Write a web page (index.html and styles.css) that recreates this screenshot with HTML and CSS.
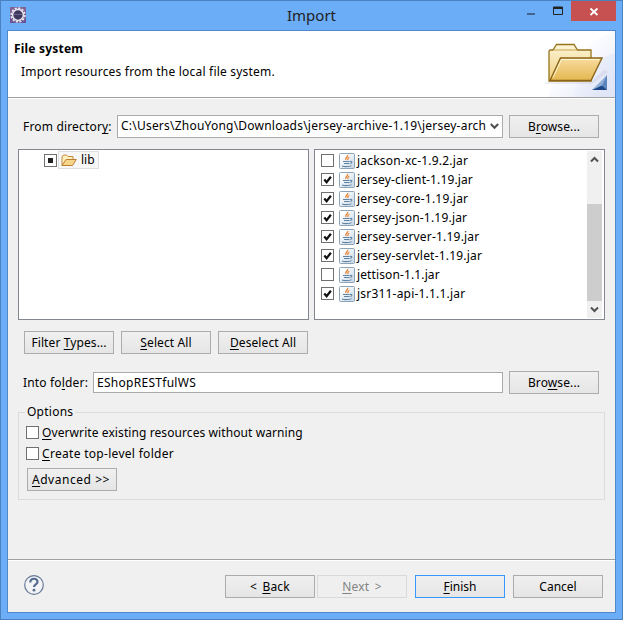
FILE: index.html
```html
<!DOCTYPE html>
<html lang="en">
<head>
<meta charset="utf-8">
<title>Import</title>
<link rel="stylesheet" href="styles.css">
</head>
<body>
<svg class="defs" width="0" height="0" aria-hidden="true">
  <defs>
    <linearGradient id="back" x1="0" y1="0" x2="0" y2="1"><stop offset="0" stop-color="#fdf6d8"/><stop offset="1" stop-color="#eccb78"/></linearGradient>
    <linearGradient id="front" x1="0" y1="0" x2="0" y2="1"><stop offset="0" stop-color="#f8dca0"/><stop offset="1" stop-color="#e4b750"/></linearGradient>
    <linearGradient id="jarbg" x1="0" y1="0" x2="1" y2="1"><stop offset="0.2" stop-color="#ffffff"/><stop offset="1" stop-color="#c3d4e4"/></linearGradient>
    <linearGradient id="glow" x1="0.2" y1="0.2" x2="1" y2="1"><stop offset="0.2" stop-color="#ffffff"/><stop offset="1" stop-color="#d9e0f6"/></linearGradient>
    <linearGradient id="glow2" x1="0" y1="0" x2="1" y2="0.4"><stop offset="0.1" stop-color="#dce3f7" stop-opacity="0"/><stop offset="1" stop-color="#dce3f7"/></linearGradient>
    <symbol id="jar" viewBox="0 0 16 16">
      <rect x=".5" y=".5" width="15" height="15" rx="1" fill="url(#jarbg)" stroke="#8da3b8"/>
      <path d="M8.800 1.800c.6 2-3 2.600-1.900 5.200M10.300 4.200c-2.200.9-1.600 1.500-1.300 3" fill="none" stroke="#e8812e" stroke-width="1.200"/>
      <path d="M4 8.500h6.500M5 10.500h5.500M3 12.900c2 .9 7.500 1 9.500-.3M11 8.500c2.500-.8 2.500 1.500.3 2" fill="none" stroke="#5f83a3" stroke-width="1.100"/>
    </symbol>
    <symbol id="tick" viewBox="0 0 13 13"><path d="M3.300 6.500 5.600 9.200 9.900 3.700" fill="none" stroke="#111" stroke-width="2.200"/></symbol>
  </defs>
</svg>
<div class="window">
  <header class="titlebar">
    <svg class="app-icon" viewBox="0 0 16 16"><rect width="16" height="16" fill="#6a5492"/><path d="M0 0h16v5H0z" fill="#7f6397"/><circle cx="8" cy="8" r="6.800" fill="none" stroke="#e9e6ee" stroke-width="1.800" stroke-dasharray="2.160 1.400"/><circle cx="8" cy="8" r="5.400" fill="#40375f" stroke="#e9e7ee" stroke-width="1.500"/><path d="M3.800 7.500h8.400" stroke="#6d6490"/></svg>
    <h1>Import</h1>
    <div class="controls">
      <svg width="50" height="20"><path d="M6 14h8" stroke="#41658f" stroke-width="2"/><path d="M32.500 7v7.500h9V7z" fill="none" stroke="#222"/><path d="M32 8h10" stroke="#222" stroke-width="2"/></svg>
      <div class="close"><svg width="45" height="20"><path d="M19.500 7.500l7 6.500M26.500 7.500l-7 6.500" stroke="#fff" stroke-width="1.800"/></svg></div>
    </div>
  </header>
  <main class="client">
    <section class="banner">
      <div class="heading"><h2>File system</h2><p>Import resources from the local file system.</p></div>
      <svg class="banner-art" width="75" height="66" viewBox="0 0 75 66">
        <path d="M75 0C48 10 18 32 8 66h67z" fill="url(#glow)" opacity=".8"/>
        <path d="M75 22C52 29 39 43 33 66h42z" fill="url(#glow2)" opacity=".6"/>
        <path d="M7 51h44l13-12 4 2-16 12H4z" fill="#9a96ac" opacity=".16"/>
        <path d="M9 50V20.500q0-1.500 1.500-1.500H13l3.500-5.500H34l3.500 5.500H51V50z" fill="url(#back)" stroke="#99731c" stroke-width="1.300"/>
        <path d="M14 19h23" stroke="#b9943b" stroke-width=".8"/>
        <path d="M10 49.500 20.500 27H62L51 49.500z" fill="url(#front)" stroke="#8a651b" stroke-width="1.400"/>
        <path d="M13 46.500 21.500 28.500H59" fill="none" stroke="#fff6d4"/>
        <path d="M67 44v15H52z" fill="#8fb0d6"/><path d="M67 44v15l-5-4.500z" fill="#5b86bd"/><path d="M52 59h15l-5-4.500z" fill="#1e4787"/>
      </svg>
    </section>
    <section class="body">
      <div class="field from">
        <label class="t-from">From director<u>y</u>:</label>
        <div class="combo"><span class="path">C:\Users\ZhouYong\Downloads\jersey-archive-1.19\jersey-arch</span><svg width="9" height="7"><path d="M.8 1 4.500 4.800 8.200 1" fill="none" stroke="#505050" stroke-width="2"/></svg></div>
        <button>B<u>r</u>owse...</button>
      </div>
      <div class="panes">
        <div class="pane tree"><span class="check part"></span><div class="node"><svg width="16" height="13" viewBox="0 0 16 13"><path d="M1 11.500V3l1.500-2h3L7 2.500h5V5" fill="#fff0bd" stroke="#c28a3d"/><path d="M1 11.500 5 5.500h10.300l-3.800 6z" fill="#f7d58b" stroke="#bd7f32"/></svg><span>lib</span></div></div>
        <div class="pane list">
          <ul>
            <li><span class="check"></span><svg class="jar"><use href="#jar"/></svg><span>jackson-xc-1.9.2.jar</span></li>
            <li><span class="check"><svg><use href="#tick"/></svg></span><svg class="jar"><use href="#jar"/></svg><span class="tight">jersey-client-1.19.jar</span></li>
            <li><span class="check"><svg><use href="#tick"/></svg></span><svg class="jar"><use href="#jar"/></svg><span>jersey-core-1.19.jar</span></li>
            <li><span class="check"><svg><use href="#tick"/></svg></span><svg class="jar"><use href="#jar"/></svg><span>jersey-json-1.19.jar</span></li>
            <li><span class="check"><svg><use href="#tick"/></svg></span><svg class="jar"><use href="#jar"/></svg><span>jersey-server-1.19.jar</span></li>
            <li><span class="check"><svg><use href="#tick"/></svg></span><svg class="jar"><use href="#jar"/></svg><span>jersey-servlet-1.19.jar</span></li>
            <li><span class="check"></span><svg class="jar"><use href="#jar"/></svg><span class="tight">jettison-1.1.jar</span></li>
            <li><span class="check"><svg><use href="#tick"/></svg></span><svg class="jar"><use href="#jar"/></svg><span>jsr311-api-1.1.1.jar</span></li>
          </ul>
          <div class="scrollbar"><svg width="9" height="7"><path d="M1 5.500 4.500 2 8 5.500" fill="none" stroke="#505050" stroke-width="2"/></svg><div class="thumb"></div><svg width="9" height="7"><path d="M1 1.500 4.500 5 8 1.500" fill="none" stroke="#505050" stroke-width="2"/></svg></div>
        </div>
      </div>
      <div class="actions"><button class="spaced">Filter <u>T</u>ypes...</button><button class="spaced"><u>S</u>elect All</button><button class="spaced"><u>D</u>eselect All</button></div>
      <div class="field into"><label>Into fo<u>l</u>der:</label><div class="input"><span>EShopRESTfulWS</span></div><button>Bro<u>w</u>se...</button></div>
      <fieldset class="options">
        <legend>Options</legend>
        <div class="option"><span class="check"></span><span class="overwrite"><u>O</u>verwrite existing resources without warning</span></div>
        <div class="option"><span class="check"></span><span class="create"><u>C</u>reate top-level folder</span></div>
        <button class="advanced"><u>A</u>dvanced &gt;&gt;</button>
      </fieldset>
    </section>
    <footer class="footer">
      <svg class="help" width="20" height="20" viewBox="0 0 20 20"><circle cx="10" cy="10" r="9.300" fill="#f3f4f6" stroke="#667897" stroke-width="1.200"/><path d="M6.300 7.400c0-5 7.500-4.600 7.200-.4-.2 2.600-3.500 2.300-3.500 5.100" fill="none" stroke="#566b91" stroke-width="2.200"/><circle cx="10" cy="15.200" r="1.400" fill="#566b91"/></svg>
      <div class="nav"><button class="step">&lt; <u>B</u>ack</button><button class="step disabled"><u>N</u>ext &gt;</button><button class="default"><u>F</u>inish</button><button>Cancel</button></div>
    </footer>
  </main>
</div>
</body>
</html>
```
FILE: styles.css
```css
* { box-sizing: border-box; }
body { margin: 0; font: 12px/16px "Noto Sans", "Open Sans", sans-serif; color: #000; overflow: hidden; }
h1, h2, p, ul { margin: 0; padding: 0; font-size: inherit; font-weight: normal; }
svg { display: block; flex: none; }
.defs { position: absolute; }
u { text-decoration: underline; text-underline-offset: 2px; text-decoration-thickness: 1px; text-decoration-skip-ink: none; }
.window { width: 623px; height: 620px; background: #6badf6; border: 1px solid #4a82bf; padding: 0 6px 6px; display: flex; flex-direction: column; }
.titlebar { height: 29px; flex: none; display: grid; grid-template-columns: 95px 1fr 95px; }
.app-icon { width: 16px; height: 16px; margin: 6px 0 0 3px; }
.titlebar h1 { text-align: center; font-size: 15px; line-height: 29px; color: #222; }
.controls { display: flex; }
.controls > svg { margin-top: -1px; }
.close { width: 45px; height: 20px; background: #c75050; }
.client { flex: 1; border: 1px solid #4f89c9; background: #f0f0f0; display: flex; flex-direction: column; }
.banner { height: 68px; flex: none; background: #fff; border-bottom: 1px solid #fff; box-shadow: inset 0 -1px #a0a0a0; display: flex; justify-content: space-between; }
.heading { padding: 10px 0 0 6px; }
.heading h2 { font-weight: bold; letter-spacing: .2px; }
.heading p { margin: 7px 0 0 7px; letter-spacing: .205px; }
.body { flex: 1; padding: 16px 10px 0; }
.field { display: flex; align-items: center; height: 23px; }
label, span { white-space: nowrap; }
.field label { flex: none; padding-left: 5px; letter-spacing: .17px; }
.from label { width: 99px; }
.combo { width: 386px; height: 23px; background: #fff; border: 1px solid #ababab; display: flex; align-items: center; padding: 0 3px 2px; justify-content: space-between; }
.combo svg { margin-top: 2px; }
.path { letter-spacing: .22px; }
button { width: 90px; height: 23px; padding: 0; border: 1px solid #acacac; background: linear-gradient(#f0f0f0, #e5e5e5); font: inherit; color: #000; white-space: nowrap; }
.field button { margin-left: 6px; letter-spacing: .1px; }
.panes { display: flex; gap: 5px; margin-top: 11px; }
.pane { height: 171px; width: 291px; background: #fff; border: 1px solid #828790; }
.tree { display: flex; padding: 1px 0 0 25px; gap: 1px; }
.check { width: 13px; height: 13px; flex: none; display: block; background: #fff; border: 1px solid #707070; }
.check svg { width: 13px; height: 13px; margin: -1px; }
.part { margin-top: 3px; padding: 3px; }
.part::before { content: ""; display: block; width: 5px; height: 5px; background: #212121; }
.node { height: 18px; width: 41px; display: flex; align-items: center; gap: 4px; padding-left: 2px; border: 1px solid #dedede; background: #f7f7f7; }
.list { display: flex; justify-content: space-between; padding: 1px 2px 1px 6px; }
.list ul { list-style: none; letter-spacing: .2px; }
.list .tight { letter-spacing: .12px; }
.list li { height: 19px; display: flex; align-items: center; }
.jar { width: 16px; height: 16px; margin: 0 2px 0 5px; }
.scrollbar { width: 15px; height: 167px; background: #f0f0f0; display: flex; flex-direction: column; align-items: center; padding: 5px 0; }
.thumb { width: 15px; height: 97px; margin: 41px 0 5px; background: #cdcdcd; }
.actions { display: flex; gap: 7px; margin: 11px 0 0 6px; }
.spaced { letter-spacing: .1px; }
.into { margin-top: 17px; }
.into label { width: 75px; }
.input { width: 410px; height: 21px; background: #fff; border: 1px solid #ababab; padding: 2px 3px; letter-spacing: .28px; }
.options { margin: 10px 0 0; padding: 2px 7px 0; border: 1px solid #dcdcdc; height: 96px; min-width: 0; }
.options legend { padding: 0 2px; height: 16px; margin-left: -1px; letter-spacing: .25px; }
.option { display: flex; align-items: center; gap: 3px; height: 21px; }
.overwrite { letter-spacing: .09px; }
.create { letter-spacing: .3px; }
.options button { margin: 4px 0 0 1px; display: block; }
.advanced { letter-spacing: .55px; padding-right: 2px; }
.footer { height: 53px; flex: none; border-top: 1px solid #a0a0a0; box-shadow: inset 0 1px #fff; display: flex; justify-content: space-between; padding: 15px 12px 0 16px; }
.nav { display: flex; gap: 8px; }
.nav .step { letter-spacing: .2px; word-spacing: 2px; }
.nav .disabled { margin-left: -6px; color: #838383; border-color: #d9d9d9; background: #efefef; }
.nav .default { border-color: #3399ff; }
```
